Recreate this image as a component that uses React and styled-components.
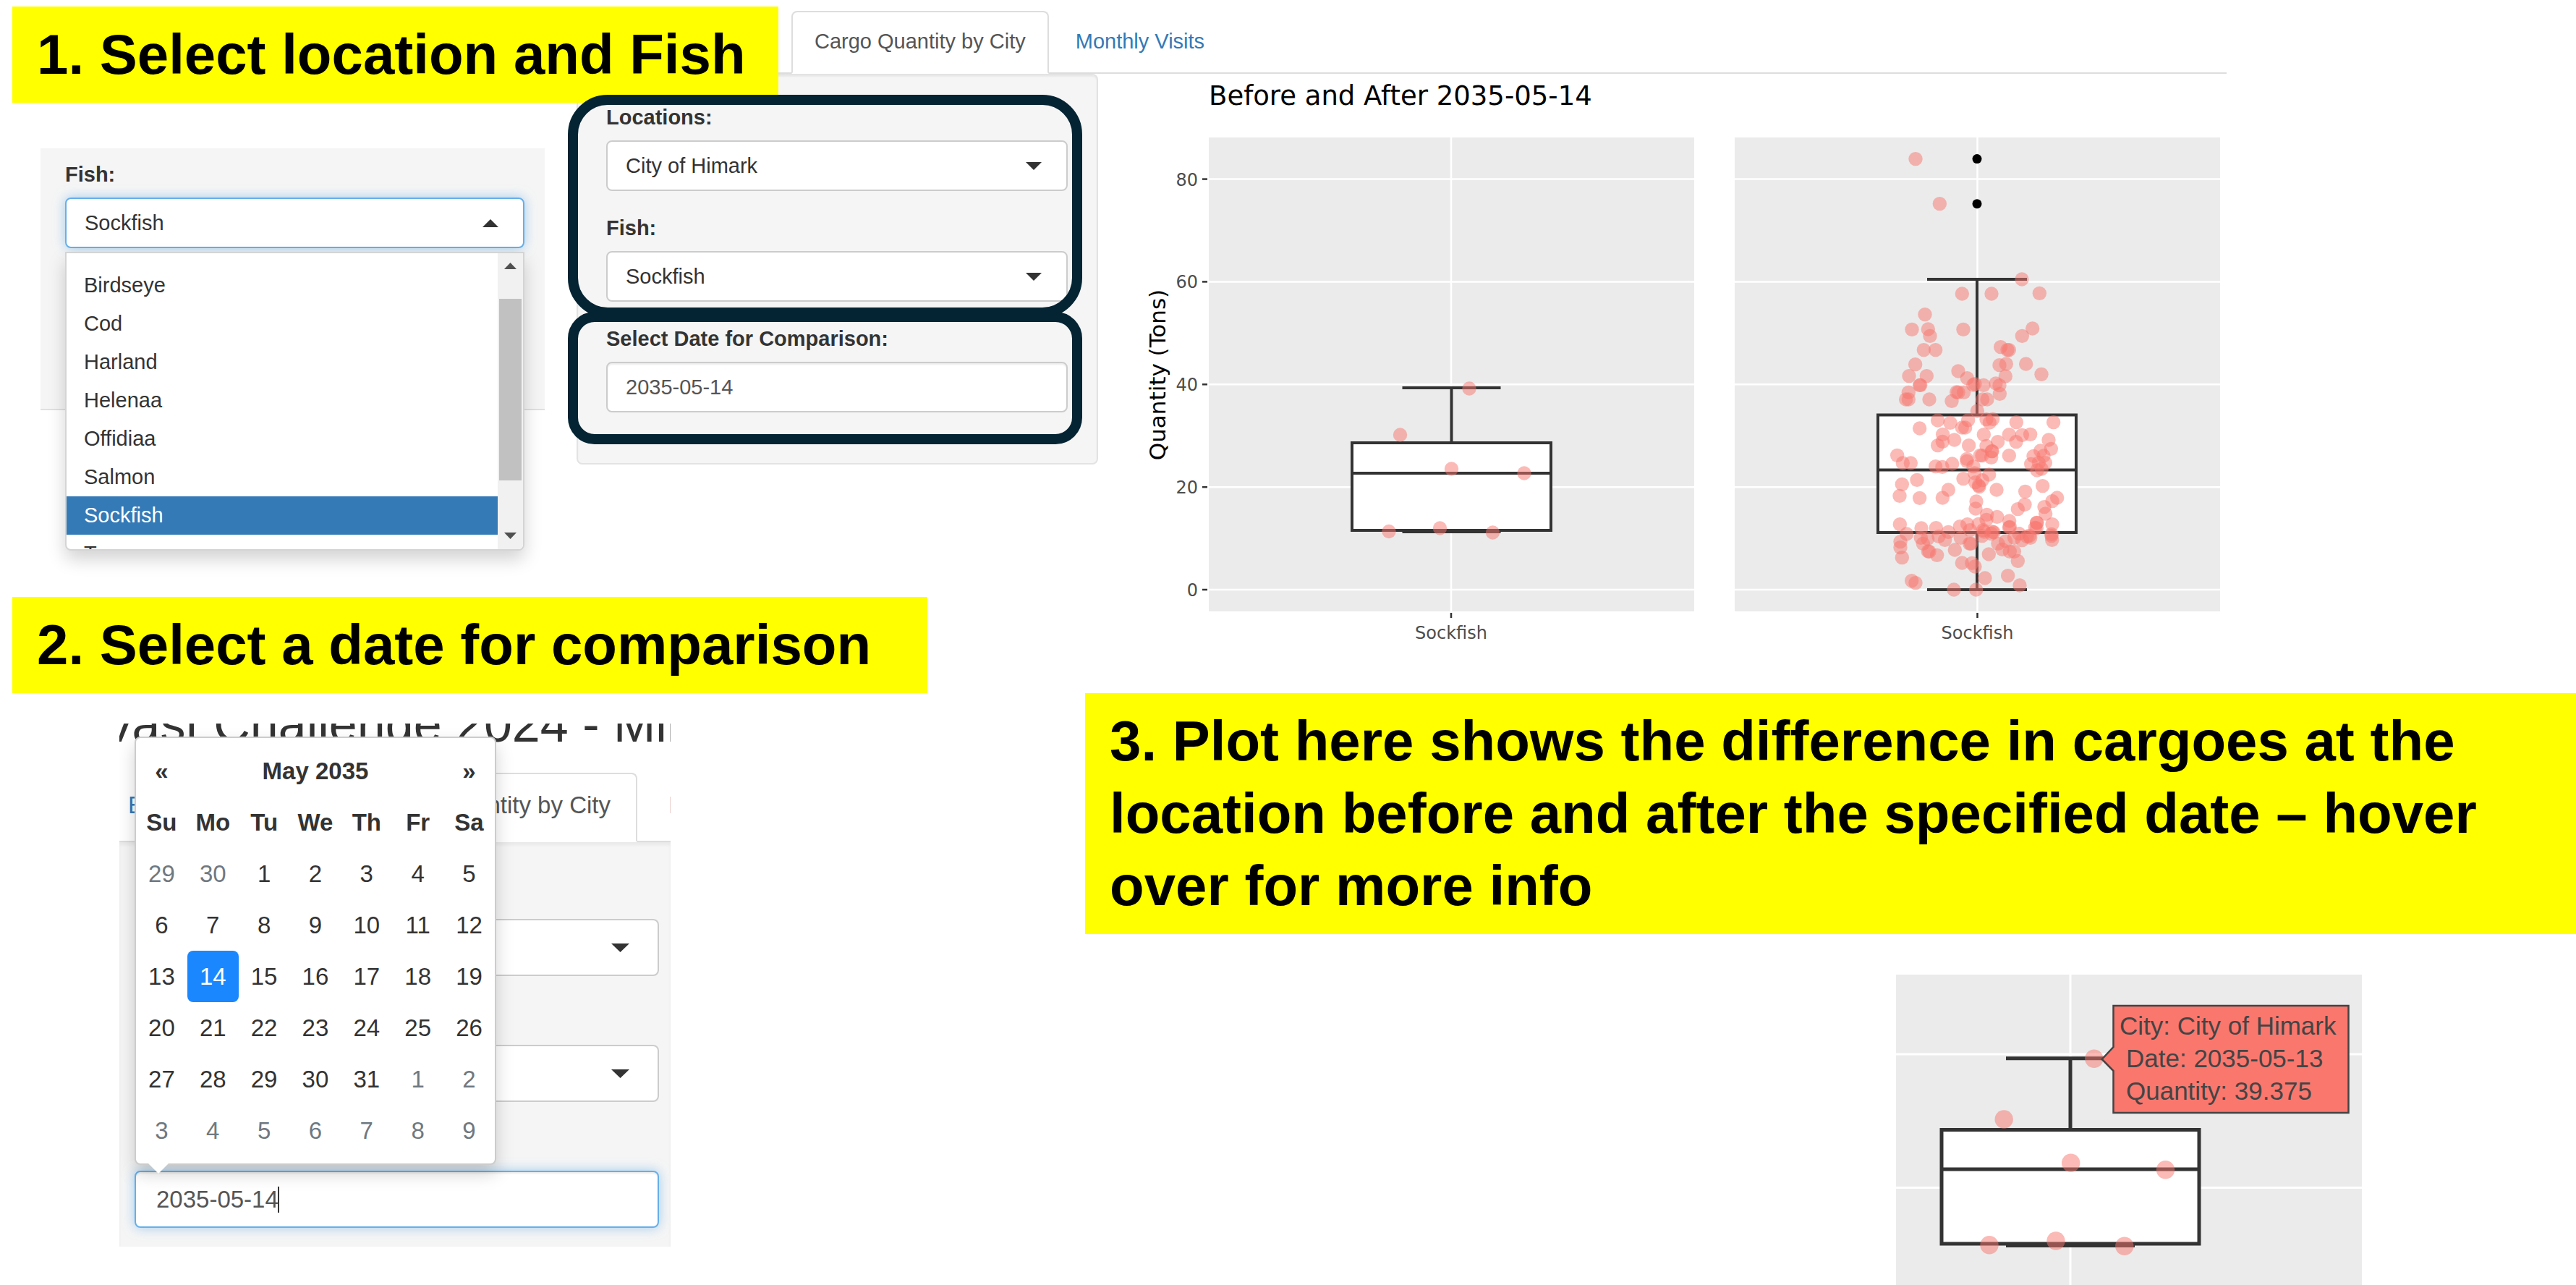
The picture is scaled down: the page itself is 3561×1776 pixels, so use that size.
import React from "react";
import styled, { createGlobalStyle, css } from "styled-components";

const sans = '"Liberation Sans", Arial, Helvetica, sans-serif';
const verdana = '"DejaVu Sans", Verdana, sans-serif';

const GlobalStyle = createGlobalStyle`
  *, *::before, *::after { box-sizing: border-box; }
  body { margin: 0; background: #fff; color: #333; font-family: ${sans}; overflow-x: hidden; }
  button, input, select { font: inherit; color: inherit; }
`;

/* ---------- page ---------- */

const Page = styled.main`
  display: grid;
  grid-template-columns: 797px 703px minmax(0, 1fr);
  grid-template-rows: minmax(825px, auto) minmax(133px, auto) auto;
`;

const FishStep = styled.section`
  grid-area: 1 / 1 / 2 / 2;
  padding: 9px 0 0 17px;
`;

const Dashboard = styled.section`
  grid-area: 1 / 2 / 3 / 4;
  padding: 15px 483px 0 0;
`;

const DateStep = styled.section`
  grid-area: 2 / 1 / 4 / 3;
  padding-left: 17px;
`;

const PlotStep = styled.section`
  grid-area: 3 / 3 / 4 / 4;
`;

const Callout = styled.h2`
  position: relative;
  z-index: 1;
  width: ${(p) => p.$width || "auto"};
  margin: 0;
  padding: 16px 34px 17px;
  background: #ff0;
  color: #000;
  font-size: 78px;
  font-weight: 700;
  line-height: 100px;
`;

/* ---------- form controls ---------- */

const small = { font: 29, line: 41, gap: 11, height: 70, pad: 25, space: 31 };
const large = { font: 33, line: 46, gap: 12, height: 79, pad: 28, space: 37 };
const scaleOf = (p) => (p.$large ? large : small);

const Field = styled.div`
  display: flex;
  flex-direction: column;
  gap: ${(p) => scaleOf(p).gap}px;
  font-size: ${(p) => scaleOf(p).font}px;
  line-height: ${(p) => scaleOf(p).line}px;
`;

const Label = styled.label`
  font-weight: 700;
`;

const ControlBox = styled.div`
  position: relative;
  display: grid;
  align-items: center;
`;

const controlStyle = css`
  grid-area: 1 / 1;
  width: 100%;
  height: ${(p) => scaleOf(p).height}px;
  margin: 0;
  padding: 0 ${(p) => scaleOf(p).pad}px;
  border: 2px solid #ccc;
  border-radius: 8px;
  background: #fff;
  outline: none;
  ${(p) =>
    p.$focused &&
    css`
      border-color: #66afe9;
      box-shadow: 0 0 16px rgba(102, 175, 233, 0.6);
    `}
`;

const Select = styled.select`
  ${controlStyle}
  appearance: none;
`;

const DateInput = styled.input`
  ${controlStyle}
  color: #555;
  box-shadow: inset 0 2px 2px rgba(0, 0, 0, 0.075)${(p) =>
    p.$focused ? ", 0 0 16px rgba(102, 175, 233, 0.6)" : ""};
`;

const Arrow = styled.svg`
  grid-area: 1 / 1;
  justify-self: end;
  width: ${(p) => (p.$large ? 25 : 22)}px;
  height: ${(p) => (p.$large ? 12 : 11)}px;
  margin-right: ${(p) => (p.$large ? 41 : 36)}px;
  fill: #333;
  pointer-events: none;
`;

const TextCursor = styled.span`
  position: absolute;
  left: 198px;
  width: 2px;
  height: 36px;
  background: #333;
`;

function Caret({ up, large: big }) {
  return (
    <Arrow $large={big} viewBox="0 0 22 11" preserveAspectRatio="none" aria-hidden="true">
      <path d={up ? "M0 11 11 0 22 11Z" : "M0 0H22L11 11Z"} />
    </Arrow>
  );
}

function SelectField({ id, label, value, large: big, focused, up, children }) {
  return (
    <Field $large={big}>
      <Label htmlFor={id}>{label}</Label>
      <ControlBox>
        <Select id={id} defaultValue={value} $large={big} $focused={focused}>
          <option>{value}</option>
        </Select>
        <Caret up={up} large={big} />
        {children}
      </ControlBox>
    </Field>
  );
}

function DateField({ id, large: big, focused, children }) {
  return (
    <Field $large={big}>
      <Label htmlFor={id}>Select Date for Comparison:</Label>
      <ControlBox>
        <DateInput id={id} type="text" defaultValue="2035-05-14" $large={big} $focused={focused} />
        {children}
      </ControlBox>
    </Field>
  );
}

/* ---------- open fish list ---------- */

const FishPanel = styled.div`
  width: 697px;
  min-height: 362px;
  margin: 63px 0 0 39px;
  padding: 16px 28px 0 34px;
  border-bottom: 2px solid #e0e0e0;
  background: #f5f5f5;
`;

const Menu = styled.div`
  position: absolute;
  top: calc(100% + 5px);
  left: 0;
  right: 0;
  display: flex;
  height: 413px;
  border: 2px solid #d4d4d4;
  border-radius: 0 0 8px 8px;
  background: #fff;
  box-shadow: 0 12px 24px rgba(0, 0, 0, 0.175);
  overflow: hidden;
`;

const OptionList = styled.ul`
  flex: 1;
  margin: 0;
  padding: 18px 0 0;
  list-style: none;
`;

const Option = styled.li`
  padding: 0 24px;
  line-height: 53px;
  white-space: nowrap;
  background: ${(p) => (p.$active ? "#337ab7" : "transparent")};
  color: ${(p) => (p.$active ? "#fff" : "#333")};
`;

const ScrollTrack = styled.div`
  display: flex;
  flex-direction: column;
  align-items: center;
  justify-content: space-between;
  width: 35px;
  padding: 13px 0 14px;
  background: #f1f1f1;
`;

const ScrollThumb = styled.div`
  flex: 1;
  width: 31px;
  margin: 41px 0 72px;
  background: #c1c1c1;
`;

const ScrollArrow = styled.svg`
  width: 17px;
  height: 9px;
  fill: #505050;
`;

const fishes = ["Birdseye", "Cod", "Harland", "Helenaa", "Offidiaa", "Salmon", "Sockfish", "Tuna"];

/* ---------- tabs and sidebar ---------- */

const Tabs = styled.nav`
  display: flex;
  gap: ${(p) => (p.$large ? 6 : 5)}px;
  padding-left: ${(p) => p.$indent || 0}px;
  border-bottom: 2px solid #ddd;
`;

const Tab = styled.a`
  flex: none;
  min-width: ${(p) => p.$min || 0}px;
  margin-bottom: -2px;
  padding: ${(p) => (p.$large ? "20px 35px 26px" : "20px 30px 22px")};
  border: 2px solid ${(p) => (p.$active ? "#ddd" : "transparent")};
  border-bottom-color: ${(p) => (p.$active ? "#fff" : "transparent")};
  border-radius: 8px 8px 0 0;
  background: ${(p) => (p.$active ? "#fff" : "transparent")};
  color: ${(p) => (p.$active ? "#555" : "#337ab7")};
  font-size: ${(p) => scaleOf(p).font}px;
  line-height: ${(p) => scaleOf(p).line}px;
  text-decoration: none;
  white-space: nowrap;
`;

const DashboardBody = styled.div`
  display: flex;
  align-items: flex-start;
  gap: 42px;
`;

const Sidebar = styled.form`
  flex: none;
  display: flex;
  flex-direction: column;
  gap: 31px;
  width: 721px;
  padding: 38px 40px 70px 39px;
  border: 2px solid #e3e3e3;
  border-radius: 8px;
  background: #f5f5f5;
  box-shadow: inset 0 2px 2px rgba(0, 0, 0, 0.05);
`;

const Highlight = styled.div`
  position: relative;
  display: flex;
  flex-direction: column;
  gap: 31px;

  &::after {
    content: "";
    position: absolute;
    z-index: 2;
    inset: ${(p) => p.$inset};
    border: 14px solid #042433;
    border-radius: ${(p) => p.$radius}px;
    pointer-events: none;
  }
`;

/* ---------- date picker ---------- */

const DatePanel = styled.div`
  width: 762px;
  height: 723px;
  margin: 42px 0 0 148px;
  overflow: hidden;
  background: #fff;
`;

const AppTitle = styled.h1`
  margin: -37px 0 28px -24px;
  font-size: 70px;
  font-weight: 400;
  line-height: 77px;
  white-space: nowrap;
`;

const TabStrip = styled.div`
  margin-left: -25px;
`;

const DateForm = styled.form`
  display: flex;
  flex-direction: column;
  gap: 37px;
  height: 100%;
  padding: 48px 16px 0 21px;
  background: #f5f5f5;
  box-shadow: inset 0 4px 4px rgba(0, 0, 0, 0.05);
`;

const Picker = styled.div`
  position: absolute;
  bottom: calc(100% + 8px);
  left: 0;
  width: 500px;
  padding: 10px 0;
  border: 2px solid #ccc;
  border-radius: 8px;
  background: #fff;
  box-shadow: 0 12px 24px rgba(0, 0, 0, 0.175);

  &::after {
    content: "";
    position: absolute;
    top: 100%;
    left: 17px;
    border: 14px solid transparent;
    border-top-color: #fff;
    border-bottom: 0;
  }
`;

const Calendar = styled.table`
  width: 100%;
  table-layout: fixed;
  border-collapse: collapse;
  line-height: 46px;
  text-align: center;

  th, td { height: 71px; padding: 0; }
`;

const DayButton = styled.button`
  display: block;
  width: 100%;
  height: 71px;
  padding: 0;
  border: 0;
  border-radius: 8px;
  font-weight: ${(p) => (p.$bold ? 700 : 400)};
  background: ${(p) => (p.$active ? "#1a87ff" : "transparent")};
  color: ${(p) => (p.$active ? "#fff" : p.$muted ? "#6f7981" : "#333")};
`;

const weekdays = ["Su", "Mo", "Tu", "We", "Th", "Fr", "Sa"];
const weeks = Array.from({ length: 6 }, (_, w) =>
  Array.from({ length: 7 }, (_, d) => {
    const n = w * 7 + d - 1;
    if (n < 1) return { day: n + 30, muted: true };
    if (n > 31) return { day: n - 31, muted: true };
    return { day: n, muted: false };
  })
);

function DatePicker() {
  return (
    <Picker>
      <Calendar>
        <thead>
          <tr>
            <th><DayButton type="button" $bold>«</DayButton></th>
            <th colSpan={5}>May 2035</th>
            <th><DayButton type="button" $bold>»</DayButton></th>
          </tr>
          <tr>{weekdays.map((d) => <th key={d}>{d}</th>)}</tr>
        </thead>
        <tbody>
          {weeks.map((week, i) => (
            <tr key={i}>
              {week.map(({ day, muted }) => (
                <td key={day}>
                  <DayButton type="button" $muted={muted} $active={day === 14}>{day}</DayButton>
                </td>
              ))}
            </tr>
          ))}
        </tbody>
      </Calendar>
    </Picker>
  );
}

/* ---------- charts ---------- */

const Chart = styled.svg`
  display: block;
  flex: 1;
  min-width: 0;
  height: auto;
`;

const ChartText = styled.text`
  font-family: ${(p) => p.$family || verdana};
  font-size: ${(p) => p.$size}px;
  fill: ${(p) => p.$color || "#000"};
`;

const beforePoints = [
  [2031, 537], [1935.5, 601], [2006.5, 648], [2107, 654], [1920, 734.5], [1990.5, 730], [2063.5, 736],
];

/* Jittered observations, in thirds of a unit from (2560, 340). */
const afterPoints = [
  [264, -361], [364, -175],
  [705, 138], [457, 198], [579, 198], [778, 196], [303, 284], [249, 346], [316, 345], [462, 346],
  [324, 373], [749, 342], [706, 373], [298, 431], [347, 431], [617, 419], [645, 431], [652, 431],
  [263, 491], [237, 539], [310, 539], [441, 519], [478, 548], [612, 494], [640, 489], [722, 489],
  [786, 532], [637, 540], [281, 577], [284, 577], [503, 576], [510, 572], [546, 577], [597, 570],
  [612, 578], [235, 607], [434, 606], [441, 607], [464, 607], [613, 613], [224, 636], [235, 636],
  [321, 636], [414, 643], [542, 636], [561, 636], [520, 684], [356, 723], [408, 733], [482, 722],
  [558, 719], [584, 718], [571, 732], [682, 731], [836, 731], [281, 756], [457, 753], [470, 753],
  [377, 781], [425, 804], [376, 811], [356, 827], [485, 827], [547, 782], [605, 812], [652, 782],
  [706, 784], [740, 781], [681, 812], [816, 804], [826, 841], [558, 829], [580, 851], [582, 851],
  [578, 877], [532, 868], [540, 869], [652, 869], [188, 868], [211, 900], [244, 900], [347, 914],
  [375, 916], [416, 903], [477, 883], [477, 892], [504, 914], [782, 849], [753, 871], [795, 870],
  [743, 904], [775, 899], [802, 899], [768, 930], [787, 924], [509, 942], [569, 948], [462, 965],
  [541, 971], [512, 980], [526, 993], [528, 998], [208, 988], [270, 970], [198, 1036], [281, 1045],
  [376, 1044], [400, 1011], [600, 1011], [791, 995], [719, 1018], [717, 1072], [688, 1091],
  [851, 1044], [831, 1058], [798, 1082], [803, 1110], [516, 1059], [513, 1089], [560, 1114],
  [558, 1135], [602, 1123], [653, 1140], [655, 1165], [652, 1167], [767, 1147], [767, 1148],
  [760, 1168], [831, 1154], [199, 1154], [227, 1194], [288, 1170], [349, 1169], [448, 1163],
  [479, 1154], [490, 1178], [525, 1153], [400, 1186], [360, 1204], [386, 1219], [545, 1178],
  [548, 1185], [583, 1185], [588, 1187], [578, 1193], [540, 1202], [286, 1210], [314, 1214],
  [295, 1234], [316, 1266], [321, 1267], [353, 1282], [201, 1226], [201, 1250], [208, 1292],
  [427, 1260], [451, 1210], [488, 1234], [494, 1234], [606, 1234], [638, 1224], [624, 1258],
  [655, 1267], [673, 1267], [568, 1278], [674, 1210], [693, 1193], [706, 1220], [726, 1204],
  [736, 1202], [740, 1210], [766, 1170], [828, 1195], [828, 1202], [830, 1219], [688, 1306],
  [457, 1314], [498, 1315], [510, 1329], [552, 1377], [647, 1367], [696, 1407], [248, 1388],
  [264, 1397], [423, 1425], [515, 1425],
].map(([x, y]) => [2560 + x / 3, 340 + y / 3]);

const hoverPoints = [
  [2894.8, 1463.3], [2770.2, 1547], [2862.7, 1607.3], [2993.5, 1616.7], [2750, 1720.7], [2842, 1715], [2936.8, 1722.3],
];

function Points({ data, r }) {
  return (
    <g fill="#f8766d" fillOpacity="0.5">
      {data.map(([x, y], i) => <circle key={i} cx={x} cy={y} r={r} />)}
    </g>
  );
}

function BoxPlot({ x1, x2, top, median, bottom, high, low, cap, stroke }) {
  const mid = (x1 + x2) / 2;
  return (
    <g stroke="#333" strokeWidth={stroke} fill="none">
      <path d={`M${mid} ${high}V${top}M${mid} ${bottom}V${low}`} />
      <path d={`M${mid - cap} ${high}H${mid + cap}M${mid - cap} ${low}H${mid + cap}`} />
      <rect x={x1} y={top} width={x2 - x1} height={bottom - top} fill="#fff" />
      <path d={`M${x1} ${median}H${x2}`} />
    </g>
  );
}

const ticks = [0, 20, 40, 60, 80];
const yOf = (v) => 815 - v * 7.093;

function Facet({ x, width, mid, children }) {
  return (
    <g>
      <rect x={x} y="190" width={width} height="655" fill="#ebebeb" />
      <g stroke="#fff" strokeWidth="2.5">
        {ticks.map((t) => <path key={t} d={`M${x} ${yOf(t)}h${width}`} />)}
        <path d={`M${mid} 190V845`} />
      </g>
      <path d={`M${mid} 847v7`} stroke="#333" strokeWidth="2.5" />
      <ChartText x={mid} y="883" textAnchor="middle" $size={24} $color="#4d4d4d">Sockfish</ChartText>
      {children}
    </g>
  );
}

function CargoChart() {
  return (
    <Chart viewBox="1560 102 1518 798" role="img" aria-label="Cargo quantity box plots">
      <ChartText x="1671" y="145" $size={37}>Before and After 2035-05-14</ChartText>
      <ChartText transform="translate(1611 518) rotate(-90)" textAnchor="middle" $size={31}>Quantity (Tons)</ChartText>
      {ticks.map((t) => (
        <g key={t}>
          <ChartText x="1656" y={yOf(t) + 9} textAnchor="end" $size={24} $color="#4d4d4d">{t}</ChartText>
          <path d={`M1662 ${yOf(t)}h7`} stroke="#333" strokeWidth="2.5" />
        </g>
      ))}
      <Facet x={1671} width={671} mid={2006}>
        <BoxPlot x1={1869} x2={2144} top={612} median={654} bottom={733} high={536} low={735} cap={68} stroke={4} />
        <Points data={beforePoints} r={9.7} />
      </Facet>
      <Facet x={2398} width={671} mid={2733.5}>
        <BoxPlot x1={2596} x2={2870} top={573.5} median={649.5} bottom={736} high={386} low={815} cap={69} stroke={4} />
        <circle cx="2733" cy="219.6" r="6.5" />
        <circle cx="2733" cy="281.7" r="6.5" />
        <Points data={afterPoints} r={9.7} />
      </Facet>
    </Chart>
  );
}

const HoverFigure = styled.div`
  display: flex;
  width: 644px;
  margin: 56px 296px 0 auto;
`;

function HoverChart() {
  return (
    <Chart viewBox="2621 1347 644 429" role="img" aria-label="Box plot with point details">
      <rect x="2621" y="1347" width="644" height="429" fill="#ebebeb" />
      <path d="M2621 1457H3265M2621 1641.5H3265M2862 1347V1776" stroke="#fff" strokeWidth="3" />
      <BoxPlot x1={2684} x2={3040} top={1561.5} median={1616} bottom={1719} high={1462.7} low={1721.5} cap={89} stroke={5} />
      <Points data={hoverPoints} r={12.7} />
      <path
        d="M2905.7 1464 2921.5 1447V1390H3246.5V1538H2921.5V1480Z"
        fill="#fa776e"
        stroke="#444"
        strokeWidth="2.5"
      />
      <ChartText x="2930" y="1430" $size={35} $family={sans} $color="#444">City: City of Himark</ChartText>
      <ChartText x="2939" y="1475" $size={35} $family={sans} $color="#444">Date: 2035-05-13</ChartText>
      <ChartText x="2939" y="1520" $size={35} $family={sans} $color="#444">Quantity: 39.375</ChartText>
    </Chart>
  );
}

/* ---------- app ---------- */

export default function App() {
  return (
    <>
      <GlobalStyle />
      <Page>
        <FishStep>
          <Callout $width="1059px">1. Select location and Fish</Callout>
          <FishPanel>
            <SelectField id="fish-open" label="Fish:" value="Sockfish" focused up>
              <Menu>
                <OptionList role="listbox" aria-label="Fish">
                  {fishes.map((f) => (
                    <Option key={f} role="option" aria-selected={f === "Sockfish"} $active={f === "Sockfish"}>
                      {f}
                    </Option>
                  ))}
                </OptionList>
                <ScrollTrack aria-hidden="true">
                  <ScrollArrow viewBox="0 0 17 9"><path d="M0 9 8.5 0 17 9Z" /></ScrollArrow>
                  <ScrollThumb />
                  <ScrollArrow viewBox="0 0 17 9"><path d="M0 0H17L8.5 9Z" /></ScrollArrow>
                </ScrollTrack>
              </Menu>
            </SelectField>
          </FishPanel>
        </FishStep>

        <Dashboard>
          <Tabs $indent={297}>
            <Tab href="#cargo" $active>Cargo Quantity by City</Tab>
            <Tab href="#visits">Monthly Visits</Tab>
          </Tabs>
          <DashboardBody>
            <Sidebar>
              <Highlight $inset="-11px -20px -22px -53px" $radius={55}>
                <SelectField id="location" label="Locations:" value="City of Himark" />
                <SelectField id="fish" label="Fish:" value="Sockfish" />
              </Highlight>
              <Highlight $inset="-17px -20px -44px -53px" $radius={37}>
                <DateField id="date" />
              </Highlight>
            </Sidebar>
            <CargoChart />
          </DashboardBody>
        </Dashboard>

        <DateStep>
          <Callout $width="1265px">2. Select a date for comparison</Callout>
          <DatePanel>
            <AppTitle>Vast Challenge 2024 - Mini Challenge</AppTitle>
            <TabStrip>
              <Tabs $large>
                <Tab href="#explore" $large $min={329}>Exploratory Data</Tab>
                <Tab href="#cargo" $large $active>Cargo Quantity by City</Tab>
                <Tab href="#visits" $large>Monthly Visits</Tab>
              </Tabs>
            </TabStrip>
            <DateForm>
              <SelectField id="location-2" label="Locations:" value="City of Himark" large />
              <SelectField id="fish-2" label="Fish:" value="Sockfish" large />
              <DateField id="date-2" large focused>
                <TextCursor />
                <DatePicker />
              </DateField>
            </DateForm>
          </DatePanel>
        </DateStep>

        <PlotStep>
          <Callout>
            3. Plot here shows the difference in cargoes at the location before and after the
            specified date – hover over for more info
          </Callout>
          <HoverFigure>
            <HoverChart />
          </HoverFigure>
        </PlotStep>
      </Page>
    </>
  );
}
